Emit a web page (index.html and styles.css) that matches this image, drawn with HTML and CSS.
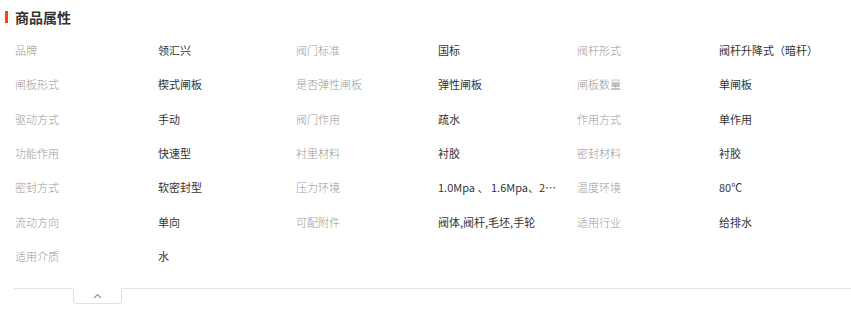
FILE: index.html
```html
<!DOCTYPE html>
<html lang="zh">
<head>
<meta charset="utf-8">
<link rel="stylesheet" href="styles.css">
</head>
<body>
<div class="panel">
  <h2 class="title">商品属性</h2>
  <div class="attrs">
    <div class="row">
      <span class="k">品牌</span><span class="v">领汇兴</span>
      <span class="k">阀门标准</span><span class="v">国标</span>
      <span class="k">阀杆形式</span><span class="v last">阀杆升降式（暗杆）</span>
    </div>
    <div class="row">
      <span class="k">闸板形式</span><span class="v">楔式闸板</span>
      <span class="k">是否弹性闸板</span><span class="v">弹性闸板</span>
      <span class="k">闸板数量</span><span class="v last">单闸板</span>
    </div>
    <div class="row">
      <span class="k">驱动方式</span><span class="v">手动</span>
      <span class="k">阀门作用</span><span class="v">疏水</span>
      <span class="k">作用方式</span><span class="v last">单作用</span>
    </div>
    <div class="row">
      <span class="k">功能作用</span><span class="v">快速型</span>
      <span class="k">衬里材料</span><span class="v">衬胶</span>
      <span class="k">密封材料</span><span class="v last">衬胶</span>
    </div>
    <div class="row">
      <span class="k">密封方式</span><span class="v">软密封型</span>
      <span class="k">压力环境</span><span class="v">1.0Mpa 、 1.6Mpa、2.5Mpa</span>
      <span class="k">温度环境</span><span class="v last">80℃</span>
    </div>
    <div class="row">
      <span class="k">流动方向</span><span class="v">单向</span>
      <span class="k">可配附件</span><span class="v">阀体,阀杆,毛坯,手轮</span>
      <span class="k">适用行业</span><span class="v last">给排水</span>
    </div>
    <div class="row">
      <span class="k">适用介质</span><span class="v">水</span>
    </div>
  </div>
  <div class="footer">
    <button class="toggle" type="button" aria-label="收起">
      <svg width="9" height="6" viewBox="0 0 9 6"><path d="M1 5 L4.5 1.5 L8 5" fill="none" stroke="#8a9bb0" stroke-width="1.2"/></svg>
    </button>
  </div>
</div>
</body>
</html>
```

FILE: styles.css
```css
* { box-sizing: border-box; }
html, body { margin: 0; padding: 0; background: #fff; }
body {
  font-family: "Noto Sans CJK SC", "Noto Sans", sans-serif;
  font-size: 11px;
  color: #333;
  width: 851px;
  height: 310px;
  overflow: hidden;
}
.panel { padding-top: 11px; }
.title {
  margin: 0 0 0 5px;
  padding-left: 7px;
  border-left: 3px solid #ff4400;
  font-size: 14px;
  font-weight: bold;
  line-height: 12px;
  height: 12px;
  color: #333;
  display: flex;
  align-items: center;
}
.attrs { padding: 19px 0 0 15px; }
.row {
  display: grid;
  grid-template-columns: 143px 138px 142px 139px 142px 1fr;
  height: 34.33px;
  align-items: start;
  line-height: 16px;
}
.k { color: #999; white-space: nowrap; font-weight: 300; }
.v {
  color: #333;
  white-space: nowrap;
  overflow: hidden;
  text-overflow: ellipsis;
  padding-right: 18px;
  font-weight: 400;
}
.v.last { padding-right: 0; }
.footer {
  margin-left: 14px;
  margin-top: 6px;
  border-top: 1px solid #e6e6e6;
  padding-left: 59px;
}
.toggle {
  display: flex;
  align-items: center;
  justify-content: center;
  width: 49px;
  height: 16px;
  margin-top: -1px;
  padding: 0;
  background: #fff;
  border: 1px solid #e0e0e0;
  border-top: none;
  border-radius: 0 0 4px 4px;
  cursor: pointer;
}
```
